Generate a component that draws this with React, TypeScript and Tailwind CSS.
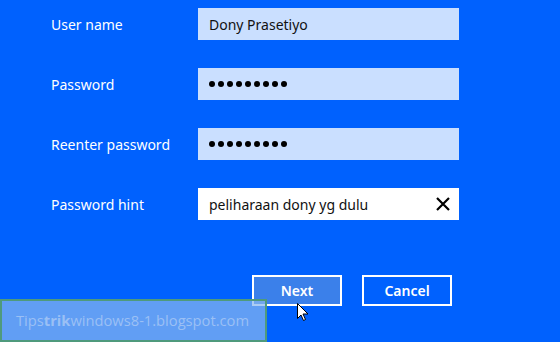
import React from "react";

const font = { fontFamily: '"Noto Sans", "Open Sans", sans-serif' };

function Dots() {
  return (
    <div className="flex gap-[3px]">
      {Array.from({ length: 9 }).map((_, i) => (
        <span key={i} className="block w-[6px] h-[6px] rounded-full bg-black" />
      ))}
    </div>
  );
}

function Row({ label, children, white }: { label: string; children: React.ReactNode; white?: boolean }) {
  return (
    <div className="flex items-center h-[32px]">
      <div className="w-[147px] text-white text-[14px]">{label}</div>
      <div
        className={`w-[261px] h-[32px] flex items-center pl-[11px] pr-[9px] text-[14px] text-[#111] ${
          white ? "bg-white" : "bg-[#cadfff]"
        }`}
      >
        {children}
      </div>
    </div>
  );
}

export default function App() {
  return (
    <div className="relative w-[560px] h-[342px] bg-[#0061fe] overflow-hidden" style={font}>
      <div className="flex flex-col gap-[28px] pt-[8px] pl-[51px]">
        <Row label="User name">Dony Prasetiyo</Row>
        <Row label="Password">
          <Dots />
        </Row>
        <Row label="Reenter password">
          <Dots />
        </Row>
        <Row label="Password hint" white>
          <span className="flex-1">peliharaan dony yg dulu</span>
          <svg width="14" height="14" viewBox="0 0 14 14">
            <path d="M1 1 L13 13 M13 1 L1 13" stroke="#000" strokeWidth="2.2" />
          </svg>
        </Row>
      </div>
      <div className="flex gap-[20px] pl-[252px] mt-[55px]">
        <button className="w-[90px] h-[31px] border-2 border-white bg-[#3b80ea] text-white text-[14px] font-semibold">
          Next
        </button>
        <button className="w-[90px] h-[31px] border-2 border-white text-white text-[14px] font-semibold">
          Cancel
        </button>
      </div>
      <div
        className="absolute left-0 top-[299px] w-[267px] h-[43px] bg-[#8ab8f0]/70 border-2 border-[#4f9a7c] flex items-center pl-[14px] text-[14.7px] text-[#9bc0f4]"
        style={{ fontFamily: '"Open Sans", sans-serif' }}
      >
        Tips<b className="font-bold">trik</b>windows8-1.blogspot.com
      </div>
      <svg className="absolute left-[297px] top-[303px]" width="12" height="19" viewBox="0 0 12 19">
        <path d="M0.5 0.5 L0.5 15.5 L4 12 L6.5 17.5 L8.5 16.5 L6 11 L11 11 Z" fill="#fff" stroke="#000" strokeWidth="1" />
      </svg>
    </div>
  );
}
